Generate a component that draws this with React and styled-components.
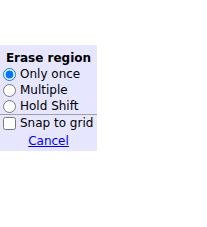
import React, { useState } from "react";
import styled, { createGlobalStyle } from "styled-components";

const GlobalStyle = createGlobalStyle`
    body {
        margin: 0;
        background: #ffffff;
        font-family: "DejaVu Sans", Verdana, sans-serif;
    }
`;

const Page = styled.div`
    padding-top: 45px;
`;

const Panel = styled.div`
    display: inline-flex;
    flex-direction: column;
    width: 97px;
    background: #e6e6ff;
    font-size: 12px;
    color: #000;
    padding-bottom: 2px;
`;

const Title = styled.div`
    font-weight: bold;
    text-align: center;
    line-height: 16px;
    padding: 5px 0 0 0;
`;

const Group = styled.div`
    display: flex;
    flex-direction: column;
    border-bottom: 1px solid #a0a0a0;
`;

const Option = styled.label`
    display: flex;
    align-items: center;
    height: 16px;
    white-space: nowrap;
    input {
        margin: 0 4px 0 3px;
        width: 13px;
        height: 13px;
    }
`;

const CancelLink = styled.a`
    align-self: center;
    color: #0000ee;
    text-decoration: underline;
    cursor: pointer;
    line-height: 16px;
    padding-top: 2px;
`;

const modes = ["Only once", "Multiple", "Hold Shift"];

export default function App() {
    const [mode, setMode] = useState(0);
    const [snap, setSnap] = useState(false);

    return (
        <>
            <GlobalStyle />
            <Page>
                <Panel>
                    <Title>Erase region</Title>
                    <Group>
                        {modes.map((m, i) => (
                            <Option key={m}>
                                <input
                                    type="radio"
                                    name="mode"
                                    checked={mode === i}
                                    onChange={() => setMode(i)}
                                />
                                {m}
                            </Option>
                        ))}
                    </Group>
                    <Option>
                        <input
                            type="checkbox"
                            checked={snap}
                            onChange={() => setSnap(!snap)}
                        />
                        Snap to grid
                    </Option>
                    <CancelLink>Cancel</CancelLink>
                </Panel>
            </Page>
        </>
    );
}
